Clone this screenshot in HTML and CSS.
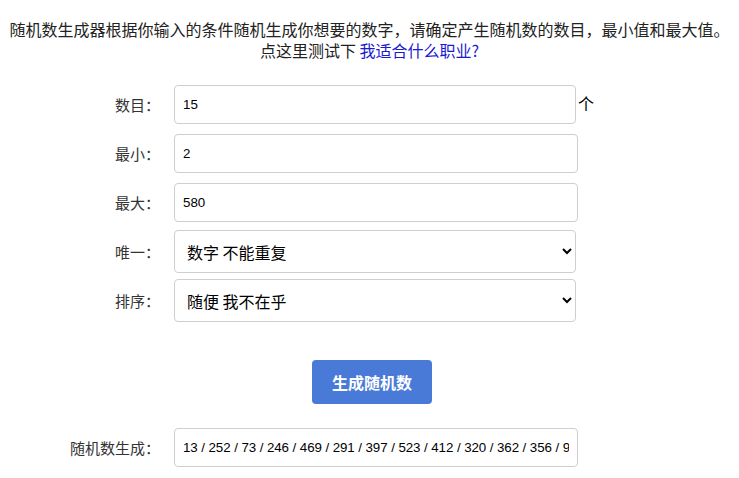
FILE: index.html
```html
<!DOCTYPE html>
<html lang="zh-CN">
<head>
<meta charset="utf-8">
<title>随机数生成器</title>
<link rel="stylesheet" href="styles.css">
</head>
<body>
<div class="intro">
  <p>随机数生成器根据你输入的条件随机生成你想要的数字，请确定产生随机数的数目，最小值和最大值。</p>
  <p>点这里测试下 <a class="link" href="#">我适合什么职业?</a></p>
</div>
<form class="form">
  <label class="lbl">数目：</label>
  <div class="field"><input class="txt" type="text" value="15"><span class="unit">个</span></div>
  <label class="lbl">最小：</label>
  <div class="field"><input class="txt" type="text" value="2"></div>
  <label class="lbl">最大：</label>
  <div class="field"><input class="txt" type="text" value="580"></div>
  <label class="lbl">唯一：</label>
  <div class="field"><select class="sel"><option>数字 不能重复</option><option>数字 可以重复</option></select></div>
  <label class="lbl">排序：</label>
  <div class="field"><select class="sel"><option>随便 我不在乎</option><option>从小到大</option><option>从大到小</option></select></div>
  <div class="btnrow"><button class="btn" type="button">生成随机数</button></div>
  <label class="lbl">随机数生成：</label>
  <div class="field"><input class="txt result" type="text" value="13 / 252 / 73 / 246 / 469 / 291 / 397 / 523 / 412 / 320 / 362 / 356 / 94 / 118 / 437"></div>
</form>
</body>
</html>
```

FILE: styles.css
```css
html, body {
  margin: 0;
  padding: 0;
  background: #fff;
}
body {
  font-family: "Noto Sans CJK SC", "Liberation Sans", sans-serif;
  color: #222;
}
.intro {
  padding-top: 19px;
  text-align: center;
  font-size: 16px;
  line-height: 21px;
}
.intro p {
  margin: 0;
}
.link {
  color: #1a1ad0;
  text-decoration: none;
}
.form {
  margin-top: 19px;
  display: grid;
  grid-template-columns: 160px 420px;
  column-gap: 14px;
  grid-auto-rows: 49px;
  align-items: center;
}
.lbl {
  text-align: right;
  font-size: 15px;
  color: #333;
}
.field {
  display: flex;
  align-items: center;
}
.txt {
  box-sizing: border-box;
  width: 404px;
  height: 39px;
  margin: 0;
  padding: 0 8px;
  border: 1px solid #cfcfcf;
  border-radius: 4px;
  font-family: "Liberation Sans", Arial, sans-serif;
  font-size: 13.33px;
  color: #000;
  background: #fff;
  outline: none;
}
.result {
  letter-spacing: -0.08px;
}
.unit {
  margin-left: 2px;
  font-size: 16px;
  color: #000;
  align-self: flex-start;
  margin-top: 6px;
}
.sel {
  box-sizing: border-box;
  width: 402px;
  height: 43px;
  margin: 0;
  padding: 0 8px 0 8px;
  border: 1px solid #cfcfcf;
  border-radius: 4px;
  font-family: "Noto Sans CJK SC", sans-serif;
  font-size: 16px;
  color: #000;
  background: #fff;
}
.btnrow {
  grid-column: 1 / -1;
  grid-row: span 2;
  align-self: stretch;
  box-sizing: border-box;
  display: flex;
  align-items: center;
  padding-left: 312px;
  padding-top: 16px;
}
.btn {
  width: 120px;
  height: 44px;
  border: 0;
  border-radius: 4px;
  background: #4a7ad8;
  color: #fff;
  font-family: "Noto Sans CJK SC", sans-serif;
  font-size: 16px;
  font-weight: 600;
  cursor: pointer;
}
```
